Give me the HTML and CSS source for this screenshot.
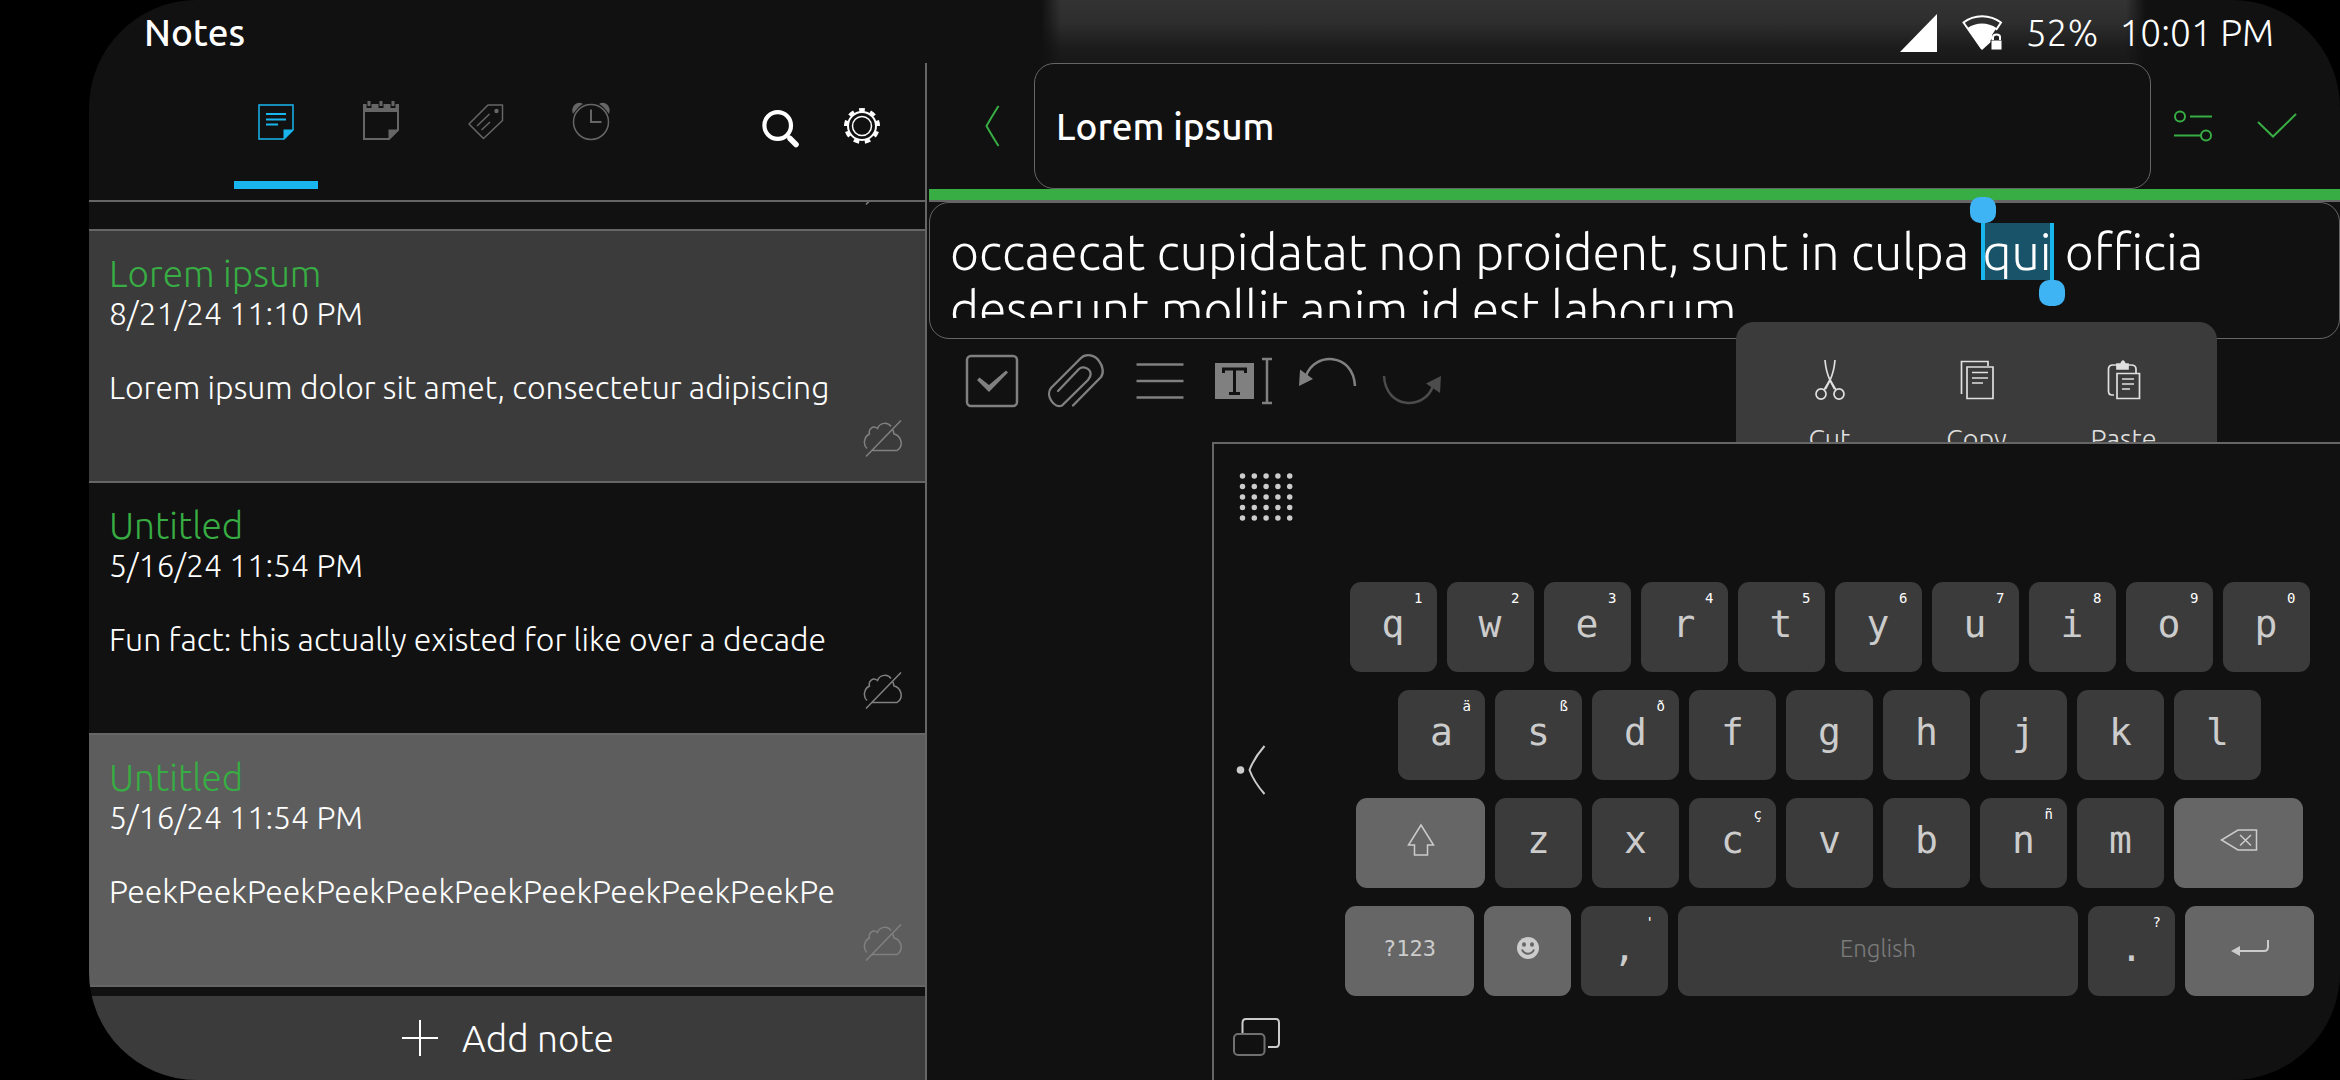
FILE: index.html
```html
<!DOCTYPE html>
<html lang="en">
<head>
<meta charset="utf-8">
<meta name="viewport" content="width=device-width, initial-scale=1">
<title>Notes</title>
<link rel="stylesheet" href="styles.css">
</head>
<body>
<svg class="defs" aria-hidden="true">
  <symbol id="cloud-off" viewBox="0 0 40 37">
    <path d="M4 28.500C0 25 .5 17 6.500 14C5 9 10 5 14.500 8.500C17 2 25 2 28 6.500M30 10L31 14C37 15 42 25 34 30.500H9M3 36.500L38 .5" fill="none" stroke="currentColor" stroke-width="1.500"/>
  </symbol>
</svg>
<div class="screen">
  <header class="status">
    <h1 class="status-title">Notes</h1>
    <div class="status-info">
      <svg class="signal" viewBox="0 0 38 40" aria-hidden="true"><path d="M37 1V39H0Z" fill="#fff"/></svg>
      <svg class="wifi" viewBox="0 0 42 40" aria-hidden="true">
        <path d="M20 36L1.500 9.500C12 1 28 1 39 9.500L34 17" fill="none" stroke="#fff" stroke-width="2"/>
        <path d="M20 37L5.500 15C14 9 26 9 34.500 15L30 22V28Z" fill="#fff"/>
        <path d="M29 27H40V37H29Z" fill="#fff" stroke="#222" stroke-width="1"/>
        <path d="M31 27V24C31 20.500 38 20.500 38 24V27" fill="none" stroke="#fff" stroke-width="2"/>
      </svg>
      <span>52%</span>
      <time>10:01 PM</time>
    </div>
  </header>

  <main class="panes">
    <section class="sidebar" aria-label="Notes list">
      <div class="sidebar-head">
        <nav class="tabs" aria-label="Sections">
          <button class="tab active" aria-label="Notes">
            <svg class="icon" viewBox="0 0 40 40"><path d="M3 3H37V28L28 37H3Z" fill="none" stroke="currentColor" stroke-width="1.500"/><path d="M27.500 27.500H37.500L27.500 37.500Z" fill="currentColor"/><path d="M10 12H30M10 17.500H30M10 22.500H22" stroke="currentColor" stroke-width="2"/></svg>
          </button>
          <button class="tab" aria-label="Notebooks">
            <svg class="icon" viewBox="0 0 40 40"><path d="M3 3H37V28L28 37H3Z" fill="none" stroke="currentColor" stroke-width="2"/><path d="M27.500 27.500H37.500L27.500 37.500ZM2 2H38V10H2Z" fill="currentColor"/><path d="M8 1V6M20 1V6M32 1V6" stroke="#111" stroke-width="5"/><path d="M8-1V4M20-1V4M32-1V4" stroke="currentColor" stroke-width="3"/></svg>
          </button>
          <button class="tab" aria-label="Tags">
            <svg class="icon" viewBox="0 0 40 40"><path d="M22 3H36.500V18.500L17.500 36.500L3 22Z" fill="none" stroke="currentColor" stroke-width="1.500" stroke-linejoin="round"/><circle cx="30.500" cy="9" r="2.200" fill="currentColor"/><path d="M11 24L23.500 12M15.500 28L24 20" stroke="currentColor" stroke-width="1.500"/></svg>
          </button>
          <button class="tab" aria-label="Reminders">
            <svg class="icon" viewBox="0 0 40 40"><path d="M2 12C-1 5 6-2 12 2C8 4 5 8 2 12ZM38 12C41 5 34-2 28 2C32 4 35 8 38 12Z" fill="currentColor"/><circle cx="20" cy="20" r="17.500" fill="none" stroke="currentColor" stroke-width="1.500"/><path d="M20 7.500V20H30.500" fill="none" stroke="currentColor" stroke-width="2"/></svg>
          </button>
        </nav>
        <div class="head-actions">
          <button class="head-action" aria-label="Search">
            <svg class="icon" viewBox="0 0 40 40"><circle cx="17.700" cy="19.500" r="13.300" fill="none" stroke="#fff" stroke-width="4.200"/><path d="M27 29L31 33" stroke="#fff" stroke-width="3"/><path d="M30 32.500L36 38.500" stroke="#fff" stroke-width="5.500" stroke-linecap="round"/></svg>
          </button>
          <button class="head-action" aria-label="Settings">
            <svg class="icon" viewBox="0 0 40 40" fill="none" stroke="#fff"><circle cx="20" cy="20" r="16" stroke-width="4" pathLength="90" stroke-dasharray="5 5" transform="rotate(-100 20 20)"/><circle cx="20" cy="20" r="14" stroke-width="2"/><circle cx="20" cy="20" r="9.500" stroke-width="1.500"/></svg>
          </button>
        </div>
      </div>

      <ul class="notes">
        <li class="note-above"><svg class="cloud" aria-hidden="true"><use href="#cloud-off"/></svg></li>
        <li class="note note-open">
          <h2>Lorem ipsum</h2>
          <time>8/21/24 11:10 PM</time>
          <p>Lorem ipsum dolor sit amet, consectetur adipiscing</p>
          <svg class="cloud" aria-hidden="true"><use href="#cloud-off"/></svg>
        </li>
        <li class="note">
          <h2>Untitled</h2>
          <time>5/16/24 11:54 PM</time>
          <p>Fun fact: this actually existed for like over a decade</p>
          <svg class="cloud" aria-hidden="true"><use href="#cloud-off"/></svg>
        </li>
        <li class="note note-pressed">
          <h2>Untitled</h2>
          <time>5/16/24 11:54 PM</time>
          <p>PeekPeekPeekPeekPeekPeekPeekPeekPeekPeekPe</p>
          <svg class="cloud" aria-hidden="true"><use href="#cloud-off"/></svg>
        </li>
      </ul>

      <button class="add-note">
        <svg class="plus" viewBox="0 0 36 36" aria-hidden="true"><path d="M18 0V36M0 18H36" stroke="currentColor" stroke-width="2"/></svg>
        Add note
      </button>
    </section>

    <section class="editor" aria-label="Editor">
      <div class="editor-head">
        <button class="head-tool" aria-label="Back"><svg class="back" viewBox="0 0 14 40"><path d="M13.500 0Q6 12 1.500 20Q6 28 13.500 40" fill="none" stroke="currentColor" stroke-width="2"/></svg></button>
        <input class="title-input" type="text" aria-label="Title" value="Lorem ipsum">
        <button class="head-tool" aria-label="Options"><svg class="icon" viewBox="0 0 40 40" fill="none" stroke="currentColor" stroke-width="2"><circle cx="7" cy="10.500" r="5"/><path d="M17 10.500H39M1 29.500H28"/><circle cx="33" cy="29.500" r="5"/></svg></button>
        <button class="head-tool" aria-label="Done"><svg class="icon" viewBox="0 0 40 40"><path d="M1 16L16 30.500L39 8" fill="none" stroke="currentColor" stroke-width="2"/></svg></button>
      </div>
      <div class="notebook-color"></div>

      <div class="text-box">
        <div class="text-view" role="textbox" aria-multiline="true" aria-label="Note text" contenteditable="true" spellcheck="false">occaecat cupidatat non proident, sunt in culpa <span class="selected">qui</span> officia deserunt mollit anim id est laborum.</div>
        <div class="popover" role="toolbar" aria-label="Clipboard">
          <button>
            <svg class="icon" viewBox="0 0 40 40" fill="none" stroke="currentColor" stroke-width="1.700"><path d="M15 0Q16 12 20 20L24.500 29M25 0Q24 12 20 20L15.500 29"/><ellipse cx="11" cy="34" rx="5" ry="5.200"/><ellipse cx="29" cy="34" rx="5" ry="5.200"/><path d="M20 20L14 30M20 20L26 30"/></svg>
            Cut
          </button>
          <button>
            <svg class="icon" viewBox="0 0 40 40" fill="none" stroke="currentColor" stroke-width="1.700"><path d="M4.500 34V1.500H31V6M10 7H36V38.500H10ZM15 12.500H31M15 18H31M15 23H26"/></svg>
            Copy
          </button>
          <button>
            <svg class="icon" viewBox="0 0 40 40" fill="none" stroke="currentColor" stroke-width="1.700"><path d="M10 35H8Q4.500 35 4.500 31V9Q4.500 5 9 5H27Q32 5 32 9V13M13 13.500H35.500V38.500H13ZM18 19H30M18 24H30M18 29H26"/><path d="M13 4H17Q18 1 19 1T21 4H24V9H13Z" fill="currentColor"/></svg>
            Paste
          </button>
        </div>
      </div>

      <div class="toolbar" role="toolbar" aria-label="Formatting">
        <button aria-label="Checkbox"><svg class="tool" viewBox="0 0 60 60"><rect x="5" y="5" width="50" height="50" rx="4" fill="none" stroke="currentColor" stroke-width="2.500"/><path d="M15 29L17.500 26.500L27 34L44 19.500L46 21.500L27 41Z" fill="currentColor"/></svg></button>
        <button aria-label="Attach file"><svg class="tool" viewBox="0 0 60 60" fill="none" stroke="currentColor" stroke-width="2.300" stroke-linecap="round"><path d="M27 54.500L55 26C58 22 57 15 53 10C49 4 40 2 35 7L5 37C-1 44 8 58 16 54.500L42 29C50 20 38 13 33 18L12 40"/></svg></button>
        <button aria-label="List"><svg class="tool" viewBox="0 0 60 60"><path d="M6.500 13.500H53.500M6.500 30H53.500M6.500 46.500H53.500" stroke="currentColor" stroke-width="2.500"/></svg></button>
        <button aria-label="Text format"><svg class="tool" viewBox="0 0 60 60" fill="none"><path d="M1 12H40V48H1Z" fill="currentColor"/><path d="M9.500 22V18H31.500V22M20.500 18V42.500M15 42.500H26" stroke="#111" stroke-width="3"/><path d="M48 8H58M48 52H58M53 8V52" stroke="currentColor" stroke-width="2.500"/></svg></button>
        <button aria-label="Undo"><svg class="tool" viewBox="0 0 60 60"><path d="M57 35C55 1 16 1 8 25" fill="none" stroke="currentColor" stroke-width="2.500"/><path d="M1 35L2 18.500L15 28Z" fill="currentColor"/></svg></button>
        <button aria-label="Redo" disabled><svg class="tool" viewBox="0 0 60 60"><path d="M2 25C4 59 43 59 51 35" fill="none" stroke="currentColor" stroke-width="2.500"/><path d="M59 25L58 42L44 32.500Z" fill="currentColor"/></svg></button>
      </div>

      <div class="keyboard">
        <div class="rail">
          <button aria-label="Move keyboard"><svg width="60" height="48" viewBox="0 0 60 48"><path d="M9.500 3H57M9.500 13.500H57M9.500 24H57M9.500 34.500H57M9.500 45H57" stroke="currentColor" stroke-width="5.500" stroke-linecap="round" stroke-dasharray="0 11.800"/></svg></button>
          <button aria-label="Collapse"><svg width="60" height="50" viewBox="0 0 60 50"><circle cx="7.500" cy="25" r="3.800" fill="currentColor"/><path d="M31.500 1Q21 13 16.500 25Q21 37 31.500 49" fill="none" stroke="currentColor" stroke-width="2"/></svg></button>
          <button aria-label="Keyboard layout"><svg width="60" height="38" viewBox="0 0 60 38" fill="none" stroke-width="2"><path d="M9.500 15V5Q9.500 1 13 1H43Q46 1 46 5V25Q46 29 43 29H35" stroke="currentColor"/><rect x="1" y="16" width="30.500" height="21" rx="4" stroke="#707070"/></svg></button>
        </div>
        <div class="keys">
          <div class="key-row">
            <button class="key">q<small>1</small></button><button class="key">w<small>2</small></button><button class="key">e<small>3</small></button><button class="key">r<small>4</small></button><button class="key">t<small>5</small></button><button class="key">y<small>6</small></button><button class="key">u<small>7</small></button><button class="key">i<small>8</small></button><button class="key">o<small>9</small></button><button class="key">p<small>0</small></button>
          </div>
          <div class="key-row">
            <button class="key">a<small>ä</small></button><button class="key">s<small>ß</small></button><button class="key">d<small>ð</small></button><button class="key">f</button><button class="key">g</button><button class="key">h</button><button class="key">j</button><button class="key">k</button><button class="key">l</button>
          </div>
          <div class="key-row">
            <button class="key wide" aria-label="Shift"><svg width="28" height="32" viewBox="0 0 28 32"><path d="M14 1L26.500 21H20.500V31H7.500V21H1.500Z" fill="none" stroke="currentColor" stroke-width="1.500"/></svg></button><button class="key">z</button><button class="key">x</button><button class="key">c<small>ç</small></button><button class="key">v</button><button class="key">b</button><button class="key">n<small>ñ</small></button><button class="key">m</button><button class="key wide" aria-label="Backspace"><svg width="38" height="22" viewBox="0 0 38 22"><path d="M36.500 1V21H18L1.500 11L18 1ZM20 6L31 16.500M31 6L20 16.500" fill="none" stroke="currentColor" stroke-width="1.500"/></svg></button>
          </div>
          <div class="key-row">
            <button class="key wide symbols">?123</button><button class="key special" aria-label="Emoji"><svg width="22" height="22" viewBox="0 0 22 22"><circle cx="11" cy="11" r="11" fill="currentColor"/><ellipse cx="7" cy="7.500" rx="2" ry="2.200" fill="#666"/><ellipse cx="15" cy="7.500" rx="2" ry="2.200" fill="#666"/><path d="M5 12.500C7 18 15 18 17 12.500" fill="none" stroke="#666" stroke-width="2"/></svg></button><button class="key">,<small>'</small></button><button class="key space">English</button><button class="key">.<small>?</small></button><button class="key wide" aria-label="Enter"><svg width="38" height="18" viewBox="0 0 38 18"><path d="M37 1V8Q37 12 33 12H7" fill="none" stroke="currentColor" stroke-width="2"/><path d="M0 12L9 7V17Z" fill="currentColor"/></svg></button>
          </div>
        </div>
      </div>
    </section>
  </main>
</div>
</body>
</html>
```
FILE: styles.css
```css
:root {
  --bg: #111;
  --surface: #3b3b3b;
  --line: #666;
  --green: #37ad43;
  --blue: #19b6ee;
}

* { box-sizing: border-box; }

body {
  margin: 0;
  padding-left: 89px;
  min-height: 100vh;
  display: flex;
  background: #000;
  color: #fff;
  font-family: Ubuntu, "Open Sans", sans-serif;
  font-weight: 300;
}

h1, h2, p, ul { margin: 0; padding: 0; font: inherit; }
ul { list-style: none; }
svg { display: block; overflow: visible; }

button {
  display: flex;
  align-items: center;
  justify-content: center;
  margin: 0;
  padding: 0;
  border: 0;
  background: none;
  color: inherit;
  font: inherit;
}

.defs { position: absolute; width: 0; height: 0; }
.icon { width: 40px; height: 40px; }
.tool { width: 60px; height: 60px; }

.screen {
  flex: 1;
  min-width: 0;
  display: flex;
  flex-direction: column;
  overflow: hidden;
  border-radius: 108px;
  background: var(--bg);
}

/* Status bar */
.status {
  position: relative;
  height: 63px;
  display: flex;
  align-items: center;
  justify-content: space-between;
  padding: 2px 66px 0 55px;
  font-size: 37px;
}
.status::before {
  content: "";
  position: absolute;
  inset: 0 8.6% 0 42.3%;
  background: linear-gradient(#333, #2e2e2e 35%, #1c1c1c 75%, #181818);
  mask-image: linear-gradient(90deg, transparent, #000 20px calc(100% - 20px), transparent);
}
.status-title, .status-info { position: relative; }
.status-title { font-weight: 500; }
.status-info { display: flex; align-items: center; }
.signal { width: 38px; height: 40px; margin-right: 24px; }
.wifi { width: 42px; height: 40px; margin-right: 22px; }
.status-info time { margin-left: 21px; }

/* Panes */
.panes {
  flex: 1;
  display: grid;
  grid-template-columns: minmax(0, 838fr) minmax(0, 1413fr);
}
.sidebar {
  display: flex;
  flex-direction: column;
  border-right: 2px solid var(--line);
}
.sidebar-head {
  display: flex;
  justify-content: space-between;
  padding: 0 22px 11px 145px;
  border-bottom: 2px solid var(--line);
}
.tabs { display: flex; gap: 21px; }
.tab {
  width: 84px;
  height: 126px;
  border-bottom: 8px solid transparent;
  color: var(--line);
}
.tab.active { border-color: var(--blue); color: var(--blue); }
.head-actions { display: flex; }
.head-action { width: 82px; height: 126px; }

/* Note list */
.notes { border-bottom: 2px solid var(--line); }
.note, .note-above {
  display: flex;
  flex-direction: column;
  padding: 22px 22px 24px 20px;
}
.note-above {
  height: 27px;
  justify-content: flex-end;
  padding-top: 0;
  overflow: hidden;
}
.note { border-top: 2px solid var(--line); }
.note-open { background: var(--surface); }
.note-pressed { background: #5d5d5d; }
.note h2 { color: var(--green); font-size: 37px; line-height: 42px; }
.note time, .note p {
  font-size: 32px;
  line-height: 37px;
  white-space: nowrap;
}
.note p { margin: 37px 0 14px; }
.cloud {
  flex: none;
  align-self: flex-end;
  width: 40px;
  height: 37px;
  color: #808080;
}

.add-note {
  height: 84px;
  margin-top: auto;
  padding-left: 2px;
  gap: 24px;
  background: var(--surface);
  font-size: 37px;
}
.plus { width: 36px; height: 36px; }

/* Editor */
.editor {
  display: flex;
  flex-direction: column;
  margin-left: 2px;
}
.editor-head {
  display: flex;
  height: 126px;
  padding: 0 21px;
  color: var(--green);
}
.head-tool { width: 84px; }
.back { width: 14px; height: 40px; }
.title-input {
  flex: 1;
  min-width: 0;
  padding: 0 21px;
  border: 1px solid var(--line);
  border-radius: 20px;
  background: var(--bg);
  color: #fff;
  font: 500 37px Ubuntu, "Open Sans", sans-serif;
}
.notebook-color {
  height: 13px;
  border-bottom: 2px solid var(--line);
  background: var(--green);
}

.text-box {
  position: relative;
  padding: 20px;
  border: 1px solid var(--line);
  border-radius: 20px;
}
.text-view {
  height: 95px;
  font-size: 50px;
  line-height: 57px;
  outline: 0;
  clip-path: inset(-30px 0 0 0);
}

/* Selected word with its drag handles */
.selected {
  position: relative;
  display: inline-block;
  padding: 0 2px;
  background: linear-gradient(90deg, var(--blue) 4px, #18536a 4px calc(100% - 4px), var(--blue) calc(100% - 4px));
}
.selected::before, .selected::after {
  content: "";
  position: absolute;
  width: 26px;
  height: 26px;
  border-radius: 10px;
  background: #3fb4f4;
}
.selected::before { left: -11px; bottom: 100%; }
.selected::after { right: -11px; top: 100%; }

.popover {
  position: absolute;
  top: 119px;
  right: 122px;
  display: flex;
  padding: 0 20px;
  border-radius: 18px;
  background: var(--surface);
  color: #e0e0e0;
  font-size: 27px;
}
.popover button {
  flex-direction: column;
  gap: 23px;
  width: 147px;
  height: 168px;
}

.toolbar {
  display: flex;
  padding: 0 21px 19px;
  color: #808080;
}
.toolbar button { width: 84px; height: 84px; }
.toolbar button:disabled { color: #4c4c4c; }

/* On-screen keyboard */
.keyboard {
  position: relative;
  flex: 1;
  display: flex;
  margin-left: 283px;
  border-top: 2px solid var(--line);
  border-left: 2px solid var(--line);
  background: var(--bg);
  color: #ccc;
}
.rail {
  flex: none;
  width: 131px;
  display: flex;
  flex-direction: column;
  justify-content: space-between;
  align-items: flex-start;
  padding: 29px 19px 24px;
}
.keys {
  flex: 1;
  display: flex;
  flex-direction: column;
  gap: 18px;
  padding: 138px 26px 0 0;
}
.key-row { display: flex; justify-content: center; gap: 10px; }
.key {
  position: relative;
  width: 87px;
  height: 90px;
  padding-bottom: 6px;
  border-radius: 11px;
  background: var(--surface);
  font: 38px "DejaVu Sans Mono", monospace;
}
.key small {
  position: absolute;
  top: 9px;
  right: 14px;
  color: #fff;
  font-size: 14px;
  line-height: 14px;
}
.key.wide { width: 129px; background: #666; }
.key.special { background: #666; }
.key.symbols { font-size: 22px; }
.key.space {
  flex: 0 1 400px;
  color: #7b7b7b;
  font: 300 24px Ubuntu, "Open Sans", sans-serif;
}
```
